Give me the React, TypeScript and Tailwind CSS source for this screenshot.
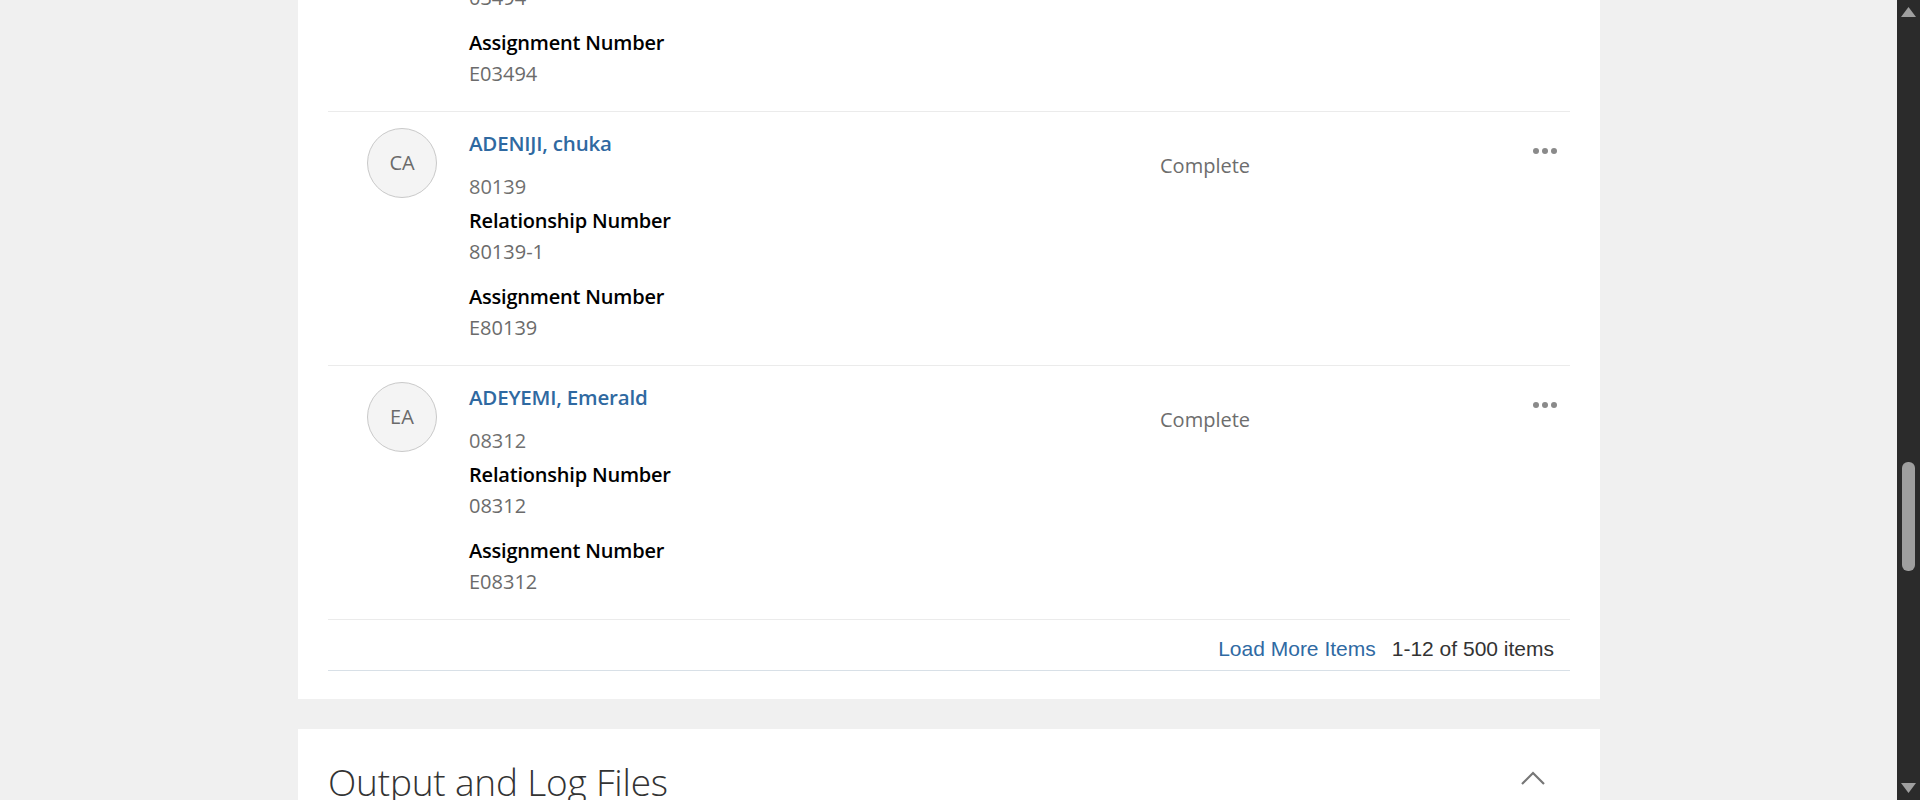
import React from "react";

type Person = {
  initials: string;
  name: string;
  id: string;
  rel: string;
  asg: string;
};

const people: Person[] = [
  { initials: "OA", name: "ADEBAYO, Olu", id: "03494", rel: "03494", asg: "E03494" },
  { initials: "CA", name: "ADENIJI, chuka", id: "80139", rel: "80139-1", asg: "E80139" },
  { initials: "EA", name: "ADEYEMI, Emerald", id: "08312", rel: "08312", asg: "E08312" },
];

function Row({ p }: { p: Person }) {
  return (
    <div className="flex items-start border-b border-[#ebebeb] pt-[16px] pb-[23px] h-[254px] box-border">
      <div className="pl-[39px] pr-[32px] shrink-0">
        <div className="w-[70px] h-[70px] rounded-full border border-[#c9c9c9] bg-[#f4f4f4] flex items-center justify-center text-[20px] text-[#6a6a6a] leading-none">
          {p.initials}
        </div>
      </div>
      <div className="w-[691px] shrink-0 flex flex-col">
        <a className="text-[20.5px] leading-[30px] text-[#2f69a1] font-semibold tracking-[-0.2px] mb-[14px]">{p.name}</a>
        <div className="text-[20px] leading-[30px] text-[#707070] mb-[4px]">{p.id}</div>
        <div className="flex flex-col mb-[15px]">
          <div className="text-[20px] leading-[30px] font-semibold text-black tracking-[-0.2px] mb-[1px]">Relationship Number</div>
          <div className="text-[20px] leading-[30px] font-medium text-[#6b6b6b]">{p.rel}</div>
        </div>
        <div className="flex flex-col">
          <div className="text-[20px] leading-[30px] font-semibold text-black tracking-[-0.2px] mb-[1px]">Assignment Number</div>
          <div className="text-[20px] leading-[30px] font-medium text-[#6b6b6b]">{p.asg}</div>
        </div>
      </div>
      <div className="flex-1 mt-[23px] text-[20px] leading-[30px] text-[#6d6d6d]">Complete</div>
      <div className="mt-[20px] mr-[13px] flex gap-[3px]">
        <span className="w-[6px] h-[6px] rounded-full bg-[#8a8a8a]" />
        <span className="w-[6px] h-[6px] rounded-full bg-[#8a8a8a]" />
        <span className="w-[6px] h-[6px] rounded-full bg-[#8a8a8a]" />
      </div>
    </div>
  );
}

export default function App() {
  return (
    <div
      className="w-[1920px] h-[800px] flex overflow-hidden bg-[#f0f0f0]"
      style={{ fontFamily: '"Open Sans", "Noto Sans", sans-serif' }}
    >
      <div className="flex-1 overflow-hidden">
        <div className="ml-[298px] w-[1302px] mt-[-142px]">
          <div className="bg-white px-[30px] pb-[28px]">
            {people.map((p) => (
              <Row key={p.initials} p={p} />
            ))}
            <div
              className="h-[51px] border-b border-[#d8e0e7] flex justify-end items-start pt-[17px] pr-[16px] gap-[16px] text-[21px] leading-[24px]"
              style={{ fontFamily: '"Liberation Sans", Arial, sans-serif' }}
            >
              <a className="text-[#2f6aa3]">Load More Items</a>
              <span className="text-[#333333]">1-12 of 500 items</span>
            </div>
          </div>
          <div className="mt-[30px] bg-white px-[30px] pt-[29px] h-[200px] flex items-start justify-between">
            <h2 className="text-[37px] leading-[48px] font-light tracking-[-0.2px] text-[#333333]">Output and Log Files</h2>
            <div className="mt-[12px] mr-[24px]">
              <svg width="26" height="16" viewBox="0 0 26 16" fill="none">
                <path d="M2 14 L13 3 L24 14" stroke="#777777" strokeWidth="2.2" />
              </svg>
            </div>
          </div>
        </div>
      </div>
      <div className="w-[23px] h-[800px] bg-[#2b2b2b] flex flex-col items-center justify-between py-[7px] shrink-0">
        <svg width="15" height="10" viewBox="0 0 15 10">
          <path d="M7.5 0 L15 10 L0 10 Z" fill="#9f9f9f" />
        </svg>
        <div className="flex-1 w-full flex flex-col items-center">
          <div className="mt-[445px] w-[13px] h-[109px] rounded-[6px] bg-[#9f9f9f]" />
        </div>
        <svg width="15" height="10" viewBox="0 0 15 10">
          <path d="M0 0 L15 0 L7.5 10 Z" fill="#9f9f9f" />
        </svg>
      </div>
    </div>
  );
}
